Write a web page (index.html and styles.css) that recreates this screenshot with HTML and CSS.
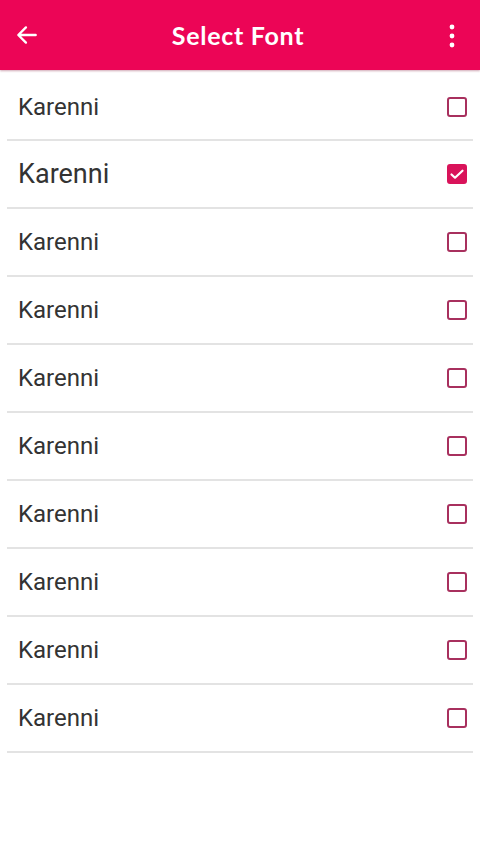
FILE: index.html
```html
<!DOCTYPE html>
<html>
<head>
<meta charset="utf-8">
<link rel="stylesheet" href="styles.css">
</head>
<body>
<header class="appbar">
  <svg class="icon back" viewBox="0 0 24 24" width="26" height="26"><path d="M20 12H5M11 5l-7 7 7 7" fill="none" stroke="#fff" stroke-width="2.2" stroke-linecap="round" stroke-linejoin="round"/></svg>
  <h1 class="title">Select Font</h1>
  <svg class="icon more" viewBox="0 0 24 24" width="24" height="26"><circle cx="12" cy="4" r="2.4" fill="#fff"/><circle cx="12" cy="13" r="2.4" fill="#fff"/><circle cx="12" cy="22" r="2.4" fill="#fff"/></svg>
</header>
<ul class="list">
  <li class="row first"><span class="name">Karenni</span><span class="box"></span></li>
  <li class="row"><span class="name big">Karenni</span><span class="box checked"><svg viewBox="0 0 20 20"><path d="M4.5 10.5l3.5 3.2 7.5-7" fill="none" stroke="#fff" stroke-width="2.2" stroke-linecap="round" stroke-linejoin="round"/></svg></span></li>
  <li class="row"><span class="name">Karenni</span><span class="box"></span></li>
  <li class="row"><span class="name">Karenni</span><span class="box"></span></li>
  <li class="row"><span class="name">Karenni</span><span class="box"></span></li>
  <li class="row"><span class="name">Karenni</span><span class="box"></span></li>
  <li class="row"><span class="name">Karenni</span><span class="box"></span></li>
  <li class="row"><span class="name">Karenni</span><span class="box"></span></li>
  <li class="row"><span class="name">Karenni</span><span class="box"></span></li>
  <li class="row"><span class="name">Karenni</span><span class="box"></span></li>
</ul>
</body>
</html>
```
FILE: styles.css
```css
html, body {
  margin: 0;
  padding: 0;
  background: #fff;
}
body {
  width: 480px;
  height: 854px;
  overflow: hidden;
  font-family: Roboto, "Liberation Sans", sans-serif;
}
.appbar {
  height: 70px;
  background: #ec0556;
  display: flex;
  align-items: center;
  padding: 0 16px 0 14px;
  box-shadow: 0 1px 2px rgba(120, 0, 40, 0.35);
  position: relative;
  z-index: 1;
}
.icon { display: block; flex: none; }
.title {
  flex: 1;
  margin: 0;
  text-align: center;
  color: #fff;
  font-family: Lato, "Open Sans", sans-serif;
  font-weight: 700;
  font-size: 25px;
  letter-spacing: 0.7px;
  padding-right: 4px;
}
.list {
  list-style: none;
  margin: 0;
  padding: 0 7px;
}
.row {
  height: 66px;
  display: flex;
  align-items: center;
  justify-content: space-between;
  border-bottom: 2px solid #e3e3e3;
  padding: 0 6px 0 11px;
}
.row.first {
  height: 65px;
  padding-top: 4px;
}
.name {
  color: #333;
  font-size: 24px;
  line-height: 1;
}
.name.big { font-size: 27px; }
.box {
  width: 16px;
  height: 16px;
  border: 2px solid #a8305e;
  border-radius: 3px;
  display: flex;
  align-items: center;
  justify-content: center;
}
.box.checked {
  background: #d9135a;
  border-color: #d9135a;
}
.box svg { width: 20px; height: 20px; flex: none; }
```
